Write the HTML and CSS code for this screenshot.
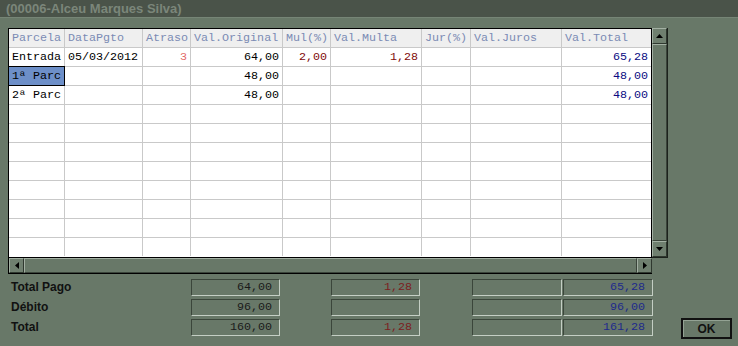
FILE: index.html
```html
<!DOCTYPE html>
<html lang="pt">
  <head>
    <meta charset="UTF-8" />
    <title>Parcelas</title>
    <link rel="stylesheet" href="styles.css">
  </head>
  <body>
    <div class="titlebar">(00006-Alceu Marques Silva)</div>

    <div class="main">
      <div class="gridbox">
        <div class="sheet">
          <div class="row head">
            <div class="cell">Parcela</div>
            <div class="cell">DataPgto</div>
            <div class="cell">Atraso</div>
            <div class="cell">Val.Original</div>
            <div class="cell">Mul(%)</div>
            <div class="cell">Val.Multa</div>
            <div class="cell">Jur(%)</div>
            <div class="cell">Val.Juros</div>
            <div class="cell">Val.Total</div>
          </div>
          <div class="row">
            <div class="cell">Entrada</div>
            <div class="cell">05/03/2012</div>
            <div class="cell num late">3</div>
            <div class="cell num">64,00</div>
            <div class="cell num red">2,00</div>
            <div class="cell num red">1,28</div>
            <div class="cell num"></div>
            <div class="cell num"></div>
            <div class="cell num navy">65,28</div>
          </div>
          <div class="row">
            <div class="cell sel">1ª Parc</div>
            <div class="cell"></div>
            <div class="cell num"></div>
            <div class="cell num">48,00</div>
            <div class="cell num"></div>
            <div class="cell num"></div>
            <div class="cell num"></div>
            <div class="cell num"></div>
            <div class="cell num navy">48,00</div>
          </div>
          <div class="row">
            <div class="cell">2ª Parc</div>
            <div class="cell"></div>
            <div class="cell num"></div>
            <div class="cell num">48,00</div>
            <div class="cell num"></div>
            <div class="cell num"></div>
            <div class="cell num"></div>
            <div class="cell num"></div>
            <div class="cell num navy">48,00</div>
          </div>
          <div class="row"><div class="cell"></div><div class="cell"></div><div class="cell"></div><div class="cell"></div><div class="cell"></div><div class="cell"></div><div class="cell"></div><div class="cell"></div><div class="cell"></div></div>
          <div class="row"><div class="cell"></div><div class="cell"></div><div class="cell"></div><div class="cell"></div><div class="cell"></div><div class="cell"></div><div class="cell"></div><div class="cell"></div><div class="cell"></div></div>
          <div class="row"><div class="cell"></div><div class="cell"></div><div class="cell"></div><div class="cell"></div><div class="cell"></div><div class="cell"></div><div class="cell"></div><div class="cell"></div><div class="cell"></div></div>
          <div class="row"><div class="cell"></div><div class="cell"></div><div class="cell"></div><div class="cell"></div><div class="cell"></div><div class="cell"></div><div class="cell"></div><div class="cell"></div><div class="cell"></div></div>
          <div class="row"><div class="cell"></div><div class="cell"></div><div class="cell"></div><div class="cell"></div><div class="cell"></div><div class="cell"></div><div class="cell"></div><div class="cell"></div><div class="cell"></div></div>
          <div class="row"><div class="cell"></div><div class="cell"></div><div class="cell"></div><div class="cell"></div><div class="cell"></div><div class="cell"></div><div class="cell"></div><div class="cell"></div><div class="cell"></div></div>
          <div class="row"><div class="cell"></div><div class="cell"></div><div class="cell"></div><div class="cell"></div><div class="cell"></div><div class="cell"></div><div class="cell"></div><div class="cell"></div><div class="cell"></div></div>
          <div class="row last"><div class="cell"></div><div class="cell"></div><div class="cell"></div><div class="cell"></div><div class="cell"></div><div class="cell"></div><div class="cell"></div><div class="cell"></div><div class="cell"></div></div>
        </div>

        <div class="vscroll">
          <div class="sbtn">
            <svg width="7" height="4" viewBox="0 0 7 4"><polygon points="3.5,0 7,4 0,4" fill="#000"/></svg>
          </div>
          <div class="thumb"></div>
          <div class="sbtn">
            <svg width="7" height="4" viewBox="0 0 7 4"><polygon points="0,0 7,0 3.5,4" fill="#000"/></svg>
          </div>
        </div>

        <div class="hscroll">
          <div class="sbtn">
            <svg width="4" height="7" viewBox="0 0 4 7"><polygon points="4,0 4,7 0,3.5" fill="#000"/></svg>
          </div>
          <div class="thumb"></div>
          <div class="sbtn">
            <svg width="4" height="7" viewBox="0 0 4 7"><polygon points="0,0 4,3.5 0,7" fill="#000"/></svg>
          </div>
        </div>
      </div>

      <div class="totals">
        <div class="label">Total Pago</div>
        <div class="box c-orig">64,00</div>
        <div class="box c-multa red">1,28</div>
        <div class="box c-juros"></div>
        <div class="box c-total navy">65,28</div>

        <div class="label">Débito</div>
        <div class="box c-orig">96,00</div>
        <div class="box c-multa"></div>
        <div class="box c-juros"></div>
        <div class="box c-total navy">96,00</div>

        <div class="label">Total</div>
        <div class="box c-orig">160,00</div>
        <div class="box c-multa red">1,28</div>
        <div class="box c-juros"></div>
        <div class="box c-total navy">161,28</div>
        <button class="ok">OK</button>
      </div>
    </div>
  </body>
</html>
```

FILE: styles.css
```css
* {
  margin: 0;
  padding: 0;
  box-sizing: border-box;
}

body {
  width: 738px;
  height: 346px;
  overflow: hidden;
  background: #687868;
  font-family: "Liberation Sans", Arial, sans-serif;
}

.titlebar {
  height: 18px;
  padding-left: 6px;
  background: #4a5349;
  border-bottom: 1px solid #768576;
  color: #7b867a;
  font-size: 13px;
  font-weight: bold;
  line-height: 17px;
}

.main {
  padding: 10px 0 0 8px;
}

/* grid + scrollbars */
.gridbox {
  display: grid;
  grid-template-columns: 644px 16px;
  grid-template-rows: 230px 16px;
}

.sheet {
  border: 1px solid #000;
  background: #fff;
  font-family: "Liberation Mono", "Courier New", monospace;
  font-size: 11.7px;
}

.row {
  display: grid;
  grid-template-columns: 56px 78px 48px 92px 48px 91px 49px 91px 89px;
  height: 19px;
}

.row.last {
  height: 18px;
}

.cell {
  height: 19px;
  padding: 0 3px;
  border-right: 1px solid #c9c9c9;
  border-bottom: 1px solid #c9c9c9;
  line-height: 18px;
  white-space: nowrap;
  overflow: hidden;
  color: #000;
}

.cell:last-child {
  border-right: none;
}

.row.last .cell {
  height: 18px;
  border-bottom: none;
}

.head .cell {
  background: #efefef;
  color: #7b8bb4;
}

.num {
  text-align: right;
}

.late {
  color: #e36a6a;
}

.red {
  color: #820a0a;
}

.navy {
  color: #0a0a82;
}

.sel {
  background: #6d8fc8;
  border-right-color: #000;
  border-bottom-color: #000;
  box-shadow: 0 -1px 0 #000;
}

.sbtn {
  width: 15px;
  height: 15px;
  display: flex;
  align-items: center;
  justify-content: center;
  background: #6f7f6f;
  border-top: 1px solid #a3b0a3;
  border-left: 1px solid #a3b0a3;
  border-right: 1px solid #2f382f;
  border-bottom: 1px solid #2f382f;
}

.thumb {
  flex: 1;
  background: #687868;
  border-top: 1px solid #a3b0a3;
  border-left: 1px solid #a3b0a3;
  border-right: 1px solid #3a443a;
  border-bottom: 1px solid #3a443a;
}

.vscroll {
  display: flex;
  flex-direction: column;
  border-right: 1px solid #1c221c;
  border-bottom: 1px solid #1c221c;
}

.vscroll .sbtn {
  height: 16px;
}

.hscroll {
  display: flex;
  border-left: 1px solid #000;
  border-bottom: 1px solid #000;
}

/* totals */
.totals {
  display: grid;
  grid-template-columns: 183px 89px 51px 89px 52px 90px 1px 90px 28px 51px;
  grid-auto-rows: 17px;
  row-gap: 3px;
  margin-top: 5px;
}

.label {
  grid-column: 1;
  padding-left: 3px;
  font-size: 12px;
  font-weight: bold;
  line-height: 17px;
  color: #111;
}

.box {
  padding-right: 7px;
  border-top: 1px solid #3b463b;
  border-left: 1px solid #3b463b;
  border-right: 1px solid #c4cec4;
  border-bottom: 1px solid #c4cec4;
  font-family: "Liberation Mono", "Courier New", monospace;
  font-size: 11.7px;
  line-height: 15px;
  text-align: right;
  color: #1a1a1a;
}

.box.red {
  color: #7c2020;
}

.box.navy {
  color: #1e2a8c;
}

.c-orig { grid-column: 2; }
.c-multa { grid-column: 4; }
.c-juros { grid-column: 6; }
.c-total { grid-column: 8; }

.ok {
  grid-column: 10;
  grid-row: 3;
  height: 21px;
  margin-top: -1px;
  background: #687868;
  border: 2px solid #111;
  box-shadow: inset 1px 1px 0 #93a293;
  font-family: "Liberation Sans", Arial, sans-serif;
  font-size: 12px;
  font-weight: bold;
  color: #111;
}
```
